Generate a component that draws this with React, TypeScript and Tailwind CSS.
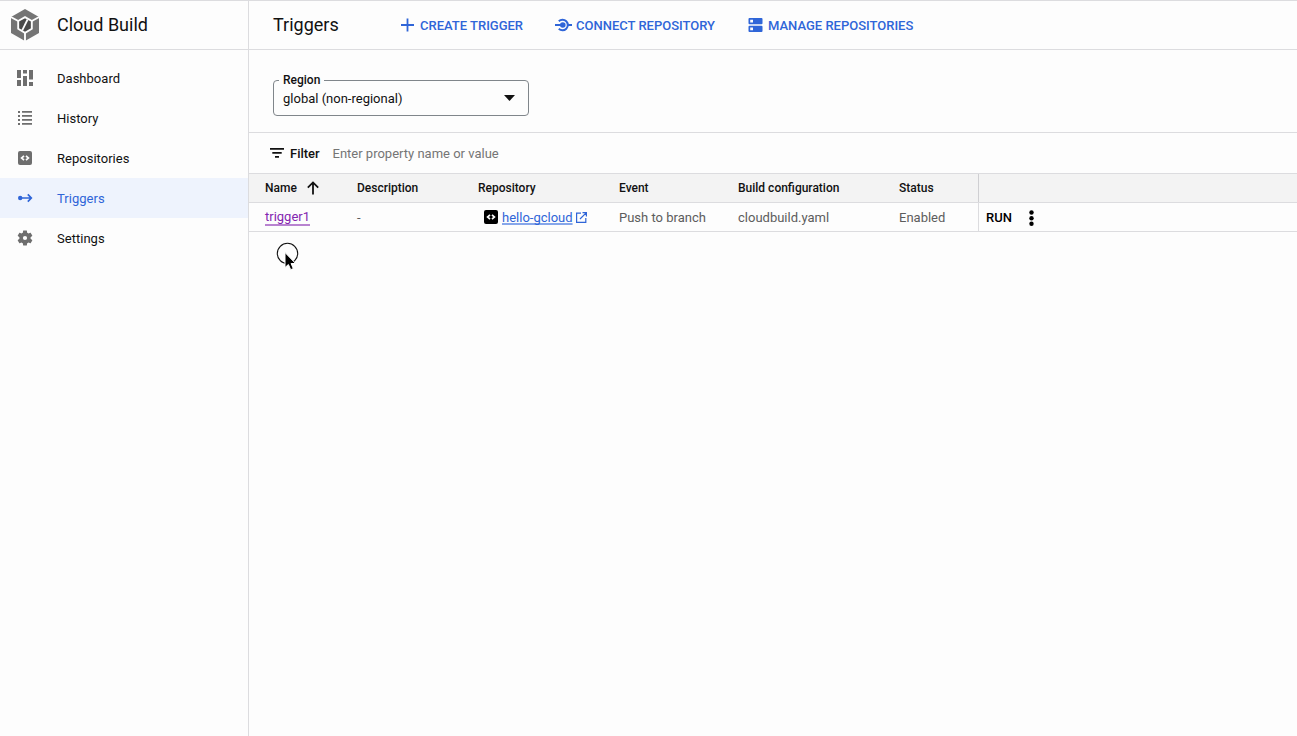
import type { ReactNode } from "react";

function Svg({ w, h, children, className = "" }: { w: number; h: number; children: ReactNode; className?: string }) {
  return (
    <svg width={w} height={h} viewBox={`0 0 ${w} ${h}`} className={`block shrink-0 ${className}`} fill="currentColor" aria-hidden="true">
      {children}
    </svg>
  );
}

function CloudBuildLogo() {
  return (
    <Svg w={30} h={34}>
      <path d="M15 1 29 9v16L15 33 1 25V9z" fill="#757575" />
      <path d="M15 9.2 21.8 13v7.8L15 24.8 8.2 20.8V13z" fill="#4a4a4a" stroke="#fdfdfd" strokeWidth="1.9" />
      <path d="M8.200 13 .8 9M21.800 13 29.200 9M15 24.800V34" stroke="#fdfdfd" strokeWidth="1.900" fill="none" />
      <path d="M12.200 22.300 17.600 11.500" stroke="#fdfdfd" strokeWidth="1.800" />
    </Svg>
  );
}

function CodeBox() {
  return (
    <Svg w={14} h={14}>
      <rect width="14" height="14" rx="2" />
      <path d="M6 4.900 3.600 7 6 9.100M8 4.900 10.400 7 8 9.100" fill="none" stroke="#fdfdfd" strokeWidth="1.700" />
    </Svg>
  );
}

const navItems: { label: string; icon: ReactNode; active?: boolean }[] = [
  {
    label: "Dashboard",
    icon: (
      <Svg w={16} h={16}>
        <path d="M0 0h4v8H0zM0 10h4v6H0zM6 0h4v3.600H6zM6 6h4v10H6zM12 0h4v9.500h-4zM12 12h4v4h-4z" />
      </Svg>
    ),
  },
  {
    label: "History",
    icon: (
      <Svg w={16} h={16}>
        <path d="M1 1h2v2H1zM1 5h2v2H1zM1 9h2v2H1zM1 13h2v2H1zM5 1h10v1.800H5zM5 5h10v1.800H5zM5 9h10v1.800H5zM5 13h10v1.800H5z" />
      </Svg>
    ),
  },
  { label: "Repositories", icon: <CodeBox /> },
  {
    label: "Triggers",
    active: true,
    icon: (
      <Svg w={16} h={16}>
        <circle cx="3.200" cy="8" r="2.200" />
        <path d="M4 8h10M10.800 4.400 14.300 8l-3.500 3.600" fill="none" stroke="currentColor" strokeWidth="1.700" />
      </Svg>
    ),
  },
  {
    label: "Settings",
    icon: (
      <svg width="18" height="18" viewBox="0 0 24 24" className="block shrink-0" fill="currentColor" aria-hidden="true">
        <path d="M19.43 12.98c.04-.32.07-.64.07-.98s-.03-.66-.07-.98l2.11-1.65c.19-.15.24-.42.12-.64l-2-3.46c-.12-.22-.39-.3-.61-.22l-2.49 1c-.52-.4-1.08-.73-1.69-.98l-.38-2.65C14.46 2.18 14.25 2 14 2h-4c-.25 0-.46.18-.49.42l-.38 2.65c-.61.25-1.17.59-1.69.98l-2.49-1c-.23-.09-.49 0-.61.22l-2 3.46c-.13.22-.07.49.12.64l2.11 1.65c-.04.32-.07.65-.07.98s.03.66.07.98l-2.11 1.65c-.19.15-.24.42-.12.64l2 3.46c.12.22.39.3.61.22l2.49-1c.52.4 1.08.73 1.69.98l.38 2.65c.03.24.24.42.49.42h4c.25 0 .46-.18.49-.42l.38-2.65c.61-.25 1.17-.59 1.69-.98l2.49 1c.23.09.49 0 .61-.22l2-3.46c.12-.22.07-.49-.12-.64l-2.11-1.65zM12 14.8a2.8 2.8 0 1 1 0-5.6 2.8 2.8 0 0 1 0 5.6z" />
      </svg>
    ),
  },
];

function Sidebar() {
  return (
    <aside className="flex w-[249px] shrink-0 flex-col border-r border-[#dcdcdf]">
      <div className="flex h-[49px] items-center border-b border-[#dcdcdf] pl-[10px]">
        <CloudBuildLogo />
        <span className="-mt-[2px] ml-[17px] text-[18px]">Cloud Build</span>
      </div>
      <nav className="flex flex-col pt-2">
        {navItems.map((item) => (
          <a key={item.label} className={`flex h-10 items-center text-[13px] tracking-[0.02px] ${item.active ? "bg-[#eef3fd] text-[#2f65d8]" : ""}`}>
            <span className={`flex w-[50px] shrink-0 justify-center ${item.active ? "" : "text-[#6e6e6e]"}`}>{item.icon}</span>
            <span className="ml-[7px] pt-px">{item.label}</span>
          </a>
        ))}
      </nav>
    </aside>
  );
}

function Toolbar() {
  return (
    <header className="flex h-[49px] shrink-0 items-center border-b border-[#dcdcdf] pl-6">
      <h1 className="-mt-[2px] w-[128px] text-[18px]">Triggers</h1>
      <div className="flex items-center pt-[2px] text-[13px] font-medium text-[#2f65d8]">
        <button className="flex w-[154px] items-center gap-[6px]">
          <Svg w={13} h={14} className="-mt-[3px]">
            <path d="M5.600 .5h1.800v5.600H13v1.800H7.400v5.600H5.600V7.900H0V6.100h5.600z" />
          </Svg>
          <span className="whitespace-nowrap">CREATE TRIGGER</span>
        </button>
        <button className="flex w-[193px] items-center gap-[4px]">
          <Svg w={17} h={14} className="-mt-[3px]">
            <circle cx="7.800" cy="7" r="2.800" />
            <path d="M0 7h7M13.500 7H17M3.800 3.200A5.300 5.300 0 1 1 3.800 10.800" fill="none" stroke="currentColor" strokeWidth="2" />
          </Svg>
          <span className="whitespace-nowrap">CONNECT REPOSITORY</span>
        </button>
        <button className="flex items-center gap-[5px]">
          <Svg w={15} h={14} className="-mt-[3px]">
            <path fillRule="evenodd" d="M1.500 0h12q1 0 1 1v4.300q0 1-1 1h-12q-1 0-1-1V1q0-1 1-1zM2.200 1.700v2.800h2.800v-2.800zM1.500 7.700h12q1 0 1 1V13q0 1-1 1h-12q-1 0-1-1V8.700q0-1 1-1zM2.200 9.400v2.800h2.800v-2.800z" />
          </Svg>
          <span className="whitespace-nowrap">MANAGE REPOSITORIES</span>
        </button>
      </div>
    </header>
  );
}

function RegionSelect() {
  return (
    <div className="h-[82px] pt-[30px] pl-6">
      <div className="relative flex h-9 w-[256px] items-center justify-between rounded-[4px] border border-[#80868b] pr-[13px] pl-[9px] text-[13px]">
        <span className="absolute -top-[9px] left-[5px] bg-[#fdfdfd] px-1 text-[12px] leading-4 font-medium">Region</span>
        <span className="pt-px">global (non-regional)</span>
        <Svg w={11} h={6}>
          <path d="M0 0h11L5.500 6z" />
        </Svg>
      </div>
    </div>
  );
}

const cols = "grid grid-cols-[92px_121px_141px_119px_161px_79px_1fr] items-center pl-4";

function TriggersTable() {
  return (
    <section>
      <div className={`${cols} h-[30px] border-y border-[#dcdcdf] bg-[#f3f3f3] text-[12px] font-medium`}>
        <span className="flex items-center gap-[10px]">
          Name
          <Svg w={12} h={14}>
            <path d="M6 13.500V1.500M.8 6.600 6 1.400l5.200 5.200" fill="none" stroke="currentColor" strokeWidth="1.800" />
          </Svg>
        </span>
        <span>Description</span>
        <span>Repository</span>
        <span>Event</span>
        <span>Build configuration</span>
        <span>Status</span>
        <span className="h-full border-l border-[#cfcfd2]" />
      </div>
      <div className={`${cols} h-[29px] border-b border-[#dcdcdf] text-[13px] text-[#5c5c5c]`}>
        <span className="flex">
          <a className="border-b-2 border-[#b883d0] pt-px leading-[15px] text-[#8426b0]">trigger1</a>
        </span>
        <span className="pt-px">-</span>
        <span className="flex items-center pl-[6px]">
          <span className="text-black">
            <CodeBox />
          </span>
          <a className="ml-1 pt-px text-[#2f65d8] underline decoration-[#86a6ea] decoration-2 underline-offset-1 [text-decoration-skip-ink:none]">hello-gcloud</a>
          <Svg w={11} h={11} className="ml-[3px] text-[#2f65d8]">
            <path d="M5 1.200H.6v9.200h9.200V6M6.500.6h3.900v3.900M10.400.6 4 7" fill="none" stroke="currentColor" strokeWidth="1.200" />
          </Svg>
        </span>
        <span className="pt-px">Push to branch</span>
        <span className="pt-px">cloudbuild.yaml</span>
        <span className="pt-px">Enabled</span>
        <span className="flex h-full items-center border-l border-[#dcdcdf] pl-[7px] font-medium text-black">
          <span className="pt-px">RUN</span>
          <Svg w={5} h={16} className="mt-px ml-[17px]">
            <circle cx="2.500" cy="2.500" r="2.200" />
            <circle cx="2.500" cy="8.300" r="2.200" />
            <circle cx="2.500" cy="13.800" r="2.200" />
          </Svg>
        </span>
      </div>
    </section>
  );
}

function Pointer() {
  return (
    <div className="absolute top-[241px] left-[275px]">
      <Svg w={26} h={30}>
        <circle cx="12.500" cy="11.500" r="10.200" fill="none" stroke="#111" strokeWidth="1.100" />
        <path d="M10 10.500v15l3.400-3 2.300 5.200 2.600-1.100-2.200-5.100h4.500z" fill="#000" stroke="#fff" strokeWidth="1" />
      </Svg>
    </div>
  );
}

export default function App() {
  return (
    <div className="relative flex h-[736px] w-[1297px] overflow-hidden border-t border-[#dcdcdf] bg-[#fdfdfd] font-['Roboto',sans-serif] text-[#111]">
      <Sidebar />
      <main className="flex min-w-0 flex-1 flex-col">
        <Toolbar />
        <RegionSelect />
        <div className="flex h-[41px] items-center border-t border-[#dcdcdf] pl-[21px] text-[13px]">
          <Svg w={14} h={10}>
            <path d="M0 0h14v1.800H0zM2.300 4h9.400v1.800H2.300zM5 8h4v1.800H5z" />
          </Svg>
          <span className="ml-[6px] w-[42.500px] pt-px font-medium">Filter</span>
          <span className="pt-px text-[#757575]">Enter property name or value</span>
        </div>
        <TriggersTable />
      </main>
      <Pointer />
    </div>
  );
}
